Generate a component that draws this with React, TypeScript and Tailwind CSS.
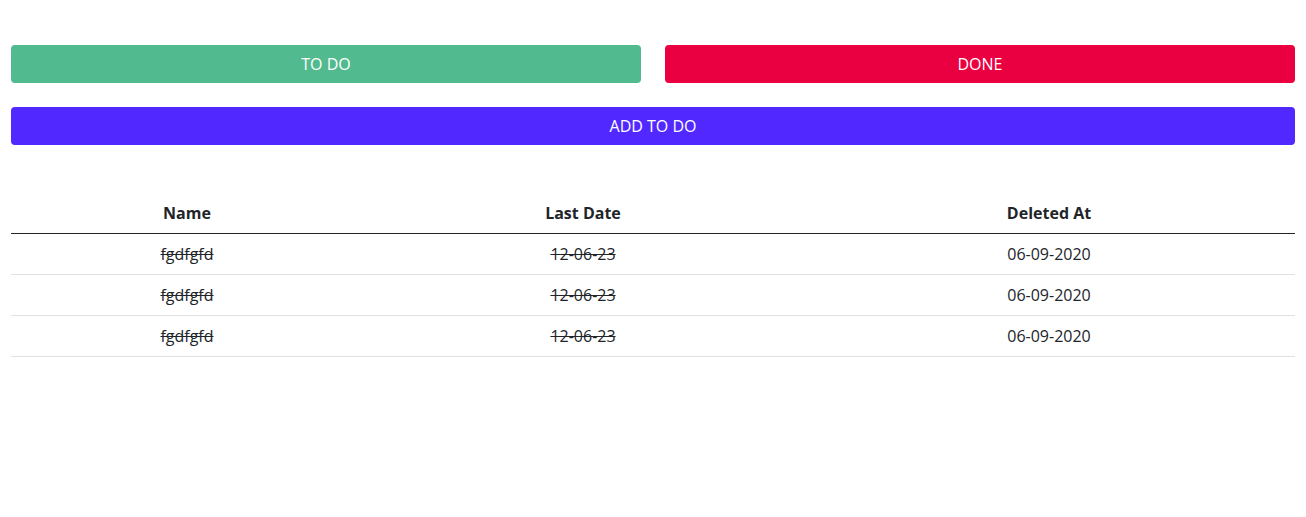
import React from 'react';

const rows = [
  { name: 'fgdfgfd', lastDate: '12-06-23', deletedAt: '06-09-2020' },
  { name: 'fgdfgfd', lastDate: '12-06-23', deletedAt: '06-09-2020' },
  { name: 'fgdfgfd', lastDate: '12-06-23', deletedAt: '06-09-2020' },
];

export default function App() {
  return (
    <div className="min-h-[517px] bg-white px-[11px] pt-[45px] text-[#212529] font-['Open_Sans',sans-serif] text-[16px]">
      {/* Tabs */}
      <div className="grid grid-cols-2 gap-[24px]">
        <button className="h-[38px] rounded-[4px] bg-[#52ba8f] text-white leading-none pb-[1px]">TO DO</button>
        <button className="h-[38px] rounded-[4px] bg-[#ea0040] text-white leading-none pb-[1px]">DONE</button>
      </div>

      <button className="mt-[24px] h-[38px] w-full rounded-[4px] bg-[#5128ff] text-white leading-none pb-[1px]">ADD TO DO</button>

      {/* Table */}
      <table className="mt-[48px] w-full border-collapse text-center">
        <thead>
          <tr className="border-b border-[#212529]">
            <th className="w-[352px] h-[40px] font-bold">Name</th>
            <th className="w-[440px] h-[40px] font-bold">Last Date</th>
            <th className="h-[40px] font-bold">Deleted At</th>
          </tr>
        </thead>
        <tbody>
          {rows.map((row, i) => (
            <tr key={i} className="border-b border-[#dee2e6]">
              <td className="h-[41px] line-through">{row.name}</td>
              <td className="h-[41px] line-through">{row.lastDate}</td>
              <td className="h-[41px]">{row.deletedAt}</td>
            </tr>
          ))}
        </tbody>
      </table>
    </div>
  );
}
